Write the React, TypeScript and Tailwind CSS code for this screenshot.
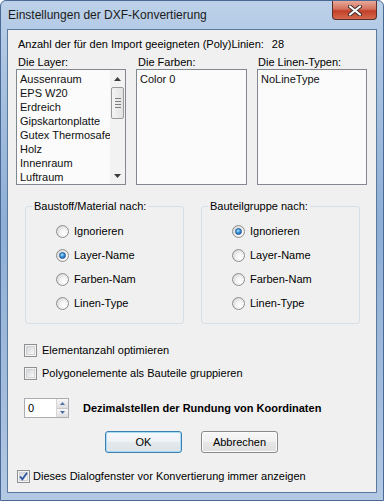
import React from "react";

const ui = "font-['Liberation_Sans',Arial,sans-serif]";

function Radio({ checked }: { checked?: boolean }) {
  return (
    <span className="flex h-[13px] w-[13px] shrink-0 items-center justify-center rounded-full border border-[#8e8f8f] bg-[radial-gradient(circle_at_65%_65%,#ffffff_0%,#f2f2f2_40%,#c9c9c9_100%)]">
      {checked && (
        <span className="h-[7px] w-[7px] rounded-full border border-[#1d5a92] bg-[radial-gradient(circle_at_40%_35%,#b5e3ff_0%,#3a93dc_45%,#0e4f95_100%)]" />
      )}
    </span>
  );
}

function Check({ checked }: { checked?: boolean }) {
  return (
    <span className="flex h-[13px] w-[13px] shrink-0 items-center justify-center border border-[#8e8f8f] bg-[#f4f4f4]">
      <span className="flex h-[9px] w-[9px] items-center justify-center border border-[#d0d3d7] bg-[linear-gradient(135deg,#d6d6d6,#f9f9f9)]">
        {checked && (
          <svg width="9" height="9" viewBox="0 0 9 9" className="overflow-visible">
            <path d="M1 4.5 L3.4 7.2 L8 0.8" fill="none" stroke="#2f55a4" strokeWidth="1.8" />
          </svg>
        )}
      </span>
    </span>
  );
}

function Group({ title, selected }: { title: string; selected: number }) {
  const opts = ["Ignorieren", "Layer-Name", "Farben-Nam", "Linen-Type"];
  return (
    <fieldset className="h-[125px] w-[159px] rounded-[3px] border border-[#d5dfe5]">
      <legend className="ml-[6px] px-[2px] text-[11px] leading-[14px] text-black">{title}</legend>
      <div className="flex flex-col pl-[30px] pt-[6px]">
        {opts.map((o, i) => (
          <div key={o} className="flex h-[24px] items-center gap-[5px] text-[11px] text-black">
            <Radio checked={i === selected} />
            <span>{o}</span>
          </div>
        ))}
      </div>
    </fieldset>
  );
}

function ListBox({ items, scroll }: { items: string[]; scroll?: boolean }) {
  return (
    <div className="flex h-[116px] border border-[#828790] bg-[#fbfbfb]">
      <div className="flex flex-1 flex-col overflow-hidden pl-[3px] pt-[2px]">
        {items.map((it) => (
          <div key={it} className="h-[14px] whitespace-nowrap text-[11px] leading-[14px] text-[#101010]">
            {it}
          </div>
        ))}
      </div>
      {scroll && (
        <div className="flex w-[15px] flex-col items-center bg-[#f2f2f2]">
          <div className="flex h-[17px] w-full items-center justify-center">
            <svg width="7" height="4" viewBox="0 0 7 4">
              <path d="M0 4 L3.5 0 L7 4 Z" fill="#3c3c3c" />
            </svg>
          </div>
          <div className="flex h-[32px] w-[13px] flex-col items-center justify-center gap-[2px] rounded-[2px] border border-[#9a9a9a] bg-[linear-gradient(to_right,#f3f3f3,#e2e2e2)]">
            <span className="h-px w-[6px] bg-[#7d7d7d]" />
            <span className="h-px w-[6px] bg-[#7d7d7d]" />
            <span className="h-px w-[6px] bg-[#7d7d7d]" />
            <span className="h-px w-[6px] bg-[#7d7d7d]" />
          </div>
          <div className="flex-1" />
          <div className="flex h-[17px] w-full items-center justify-center">
            <svg width="7" height="4" viewBox="0 0 7 4">
              <path d="M0 0 L3.5 4 L7 0 Z" fill="#3c3c3c" />
            </svg>
          </div>
        </div>
      )}
    </div>
  );
}

export default function App() {
  const layers = [
    "Aussenraum",
    "EPS W20",
    "Erdreich",
    "Gipskartonplatte",
    "Gutex Thermosafe",
    "Holz",
    "Innenraum",
    "Luftraum",
  ];
  return (
    <div
      className={`${ui} flex h-[501px] w-[384px] flex-col rounded-t-[6px] border border-[#4a6a96] bg-[linear-gradient(to_bottom,#bcd1e9_0%,#a9c2e0_15%,#8eaed6_45%,#a4bddd_80%,#b3c9e4_100%)] px-[6px] pb-[7px]`}
    >
      {/* Title bar */}
      <div className="flex h-[28px] items-start justify-between">
        <div className="pl-[1px] pt-[6px] text-[12px] leading-[16px] text-[#1b1b1b]">
          Einstellungen der DXF-Konvertierung
        </div>
        <div className="flex h-[19px] w-[45px] items-center justify-center rounded-b-[4px] border border-t-0 border-[#5a2f29] bg-[linear-gradient(to_bottom,#e9a99a_0%,#d4705d_45%,#c13f27_55%,#d56a4f_100%)]">
          <svg width="14" height="11" viewBox="0 0 14 11">
            <path d="M2 1.5 L12 9.5 M12 1.5 L2 9.5" stroke="#3b2a2a" strokeWidth="4" strokeLinecap="round" />
            <path d="M2 1.5 L12 9.5 M12 1.5 L2 9.5" stroke="#ffffff" strokeWidth="2.2" strokeLinecap="round" />
          </svg>
        </div>
      </div>

      {/* Client area */}
      <div className="flex flex-1 flex-col border border-[#5b789f] bg-[#f0f0f0] pl-[8px] pr-[9px] text-[11px] text-black">
        <div className="ml-[2px] mt-[7px] h-[14px] leading-[14px]">
          Anzahl der für den Import geeigneten (Poly)Linien:<span className="ml-[8px]">28</span>
        </div>

        <div className="mt-[4px] grid grid-cols-[110px_111px_110px] gap-x-[10px]">
          <div className="flex flex-col">
            <div className="ml-[2px] h-[14px] leading-[14px]">Die Layer:</div>
            <ListBox items={layers} scroll />
          </div>
          <div className="flex flex-col">
            <div className="ml-[2px] h-[14px] leading-[14px]">Die Farben:</div>
            <ListBox items={["Color 0"]} />
          </div>
          <div className="flex flex-col">
            <div className="ml-[1px] h-[14px] leading-[14px]">Die Linen-Typen:</div>
            <ListBox items={["NoLineType"]} />
          </div>
        </div>

        <div className="ml-[9px] mt-[14px] flex gap-[17px]">
          <Group title="Baustoff/Material nach:" selected={1} />
          <Group title="Bauteilgruppe nach:" selected={0} />
        </div>

        <div className="ml-[8px] mt-[19px] flex h-[14px] items-center gap-[5px]">
          <Check />
          <span>Elementanzahl optimieren</span>
        </div>
        <div className="ml-[8px] mt-[9px] flex h-[14px] items-center gap-[5px]">
          <Check />
          <span>Polygonelemente als Bauteile gruppieren</span>
        </div>

        <div className="ml-[8px] mt-[18px] flex h-[20px] items-center">
          <div className="flex h-[20px] w-[45px] border border-[#abadb3] bg-white">
            <div className="flex-1 pl-[3px] leading-[18px]">0</div>
            <div className="flex w-[12px] flex-col border-l border-[#d6d6d6]">
              <div className="flex flex-1 items-center justify-center border-b border-[#c9c9c9] bg-[linear-gradient(to_bottom,#f7f7f7,#dedede)]">
                <svg width="5" height="3" viewBox="0 0 5 3">
                  <path d="M0 3 L2.5 0 L5 3 Z" fill="#4a6fa5" />
                </svg>
              </div>
              <div className="flex flex-1 items-center justify-center bg-[linear-gradient(to_bottom,#f7f7f7,#dedede)]">
                <svg width="5" height="3" viewBox="0 0 5 3">
                  <path d="M0 0 L2.5 3 L5 0 Z" fill="#4a6fa5" />
                </svg>
              </div>
            </div>
          </div>
          <span className="ml-[14px] font-bold">Dezimalstellen der Rundung von Koordinaten</span>
        </div>

        <div className="mt-[13px] flex justify-center gap-[19px]">
          <button className="h-[22px] w-[77px] rounded-[3px] border border-[#3c7fb1] bg-[linear-gradient(to_bottom,#f6f9fb_0%,#eef2f5_50%,#e4e9ed_51%,#dde3e8_100%)] text-[11px] text-black shadow-[inset_0_0_0_1px_#a8dcf6]">
            OK
          </button>
          <button className="h-[22px] w-[77px] rounded-[3px] border border-[#8a8a8a] bg-[linear-gradient(to_bottom,#f7f7f7_0%,#f0f0f0_50%,#e7e7e7_51%,#e0e0e0_100%)] text-[11px] text-black shadow-[inset_0_0_0_1px_#fcfcfc]">
            Abbrechen
          </button>
        </div>

        <div className="ml-[1px] mt-[16px] flex h-[14px] items-center gap-[3px]">
          <Check checked />
          <span>Dieses Dialogfenster vor Konvertierung immer anzeigen</span>
        </div>
      </div>
    </div>
  );
}
